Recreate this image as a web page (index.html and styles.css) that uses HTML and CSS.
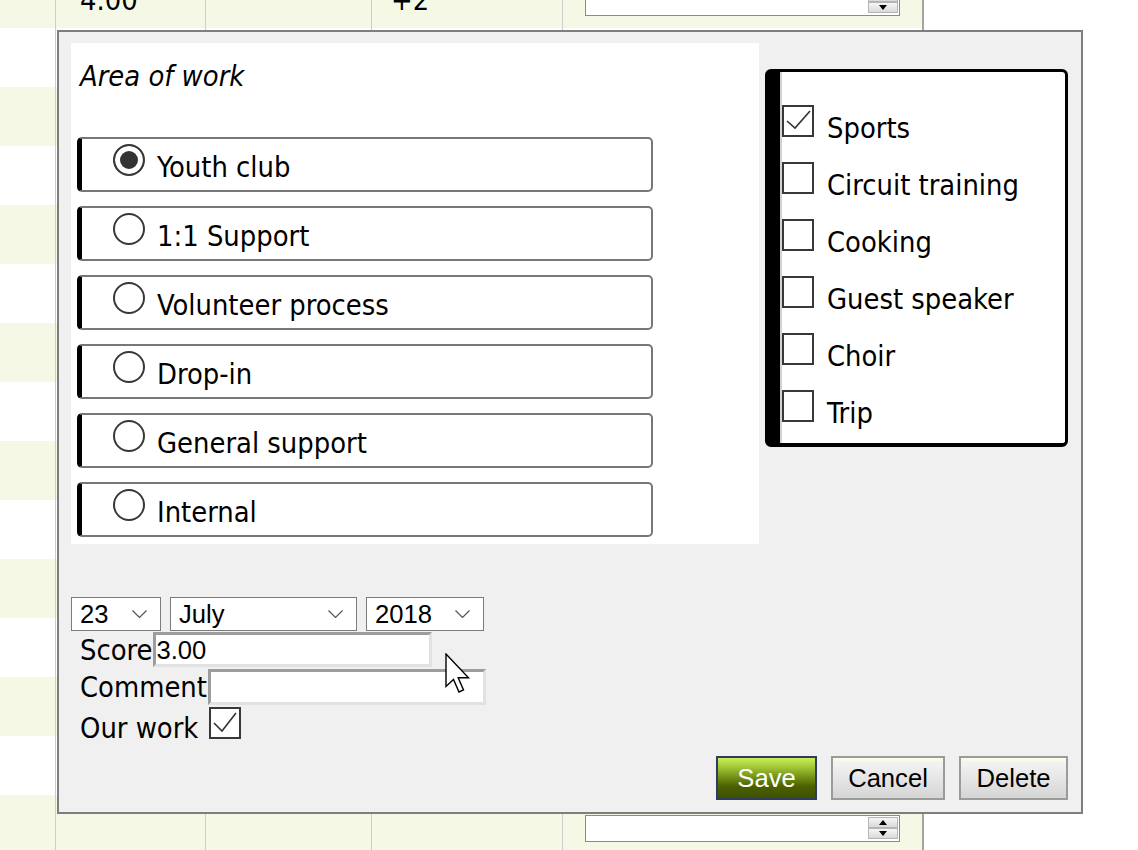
FILE: index.html
```html
<!DOCTYPE html>
<html>
<head>
<meta charset="utf-8">
<title>Area of work</title>
<link rel="stylesheet" href="styles.css">
</head>
<body>
<div class="sheet">
  <div class="row alt">
    <div class="c c1"></div>
    <div class="c c2">4.00</div>
    <div class="c c3"></div>
    <div class="c c4">+2</div>
    <div class="c c5">
      <div class="spin">
        <div class="spinbtns">
          <span class="sb"><svg width="8" height="5" viewBox="0 0 8 5"><polygon points="0,5 4,0 8,5" fill="#000"/></svg></span>
          <span class="sb"><svg width="8" height="5" viewBox="0 0 8 5"><polygon points="0,0 8,0 4,5" fill="#000"/></svg></span>
        </div>
      </div>
    </div>
  </div>
  <div class="row"><div class="c c1"></div><div class="c c2"></div><div class="c c3"></div><div class="c c4"></div><div class="c c5"></div></div>
  <div class="row alt"><div class="c c1"></div><div class="c c2"></div><div class="c c3"></div><div class="c c4"></div><div class="c c5"></div></div>
  <div class="row"><div class="c c1"></div><div class="c c2"></div><div class="c c3"></div><div class="c c4"></div><div class="c c5"></div></div>
  <div class="row alt"><div class="c c1"></div><div class="c c2"></div><div class="c c3"></div><div class="c c4"></div><div class="c c5"></div></div>
  <div class="row"><div class="c c1"></div><div class="c c2"></div><div class="c c3"></div><div class="c c4"></div><div class="c c5"></div></div>
  <div class="row alt"><div class="c c1"></div><div class="c c2"></div><div class="c c3"></div><div class="c c4"></div><div class="c c5"></div></div>
  <div class="row"><div class="c c1"></div><div class="c c2"></div><div class="c c3"></div><div class="c c4"></div><div class="c c5"></div></div>
  <div class="row alt"><div class="c c1"></div><div class="c c2"></div><div class="c c3"></div><div class="c c4"></div><div class="c c5"></div></div>
  <div class="row"><div class="c c1"></div><div class="c c2"></div><div class="c c3"></div><div class="c c4"></div><div class="c c5"></div></div>
  <div class="row alt"><div class="c c1"></div><div class="c c2"></div><div class="c c3"></div><div class="c c4"></div><div class="c c5"></div></div>
  <div class="row"><div class="c c1"></div><div class="c c2"></div><div class="c c3"></div><div class="c c4"></div><div class="c c5"></div></div>
  <div class="row alt"><div class="c c1"></div><div class="c c2"></div><div class="c c3"></div><div class="c c4"></div><div class="c c5"></div></div>
  <div class="row"><div class="c c1"></div><div class="c c2"></div><div class="c c3"></div><div class="c c4"></div><div class="c c5"></div></div>
  <div class="row alt">
    <div class="c c1"></div>
    <div class="c c2"></div>
    <div class="c c3"></div>
    <div class="c c4"></div>
    <div class="c c5">
      <div class="spin">
        <div class="spinbtns">
          <span class="sb"><svg width="8" height="5" viewBox="0 0 8 5"><polygon points="0,5 4,0 8,5" fill="#000"/></svg></span>
          <span class="sb"><svg width="8" height="5" viewBox="0 0 8 5"><polygon points="0,0 8,0 4,5" fill="#000"/></svg></span>
        </div>
      </div>
    </div>
  </div>
</div>

<div class="dialog">
  <div class="top">
    <div class="panel">
      <div class="title">Area of work</div>
      <div class="opts">
        <div class="opt"><span class="radio on"></span><span class="otxt">Youth club</span></div>
        <div class="opt"><span class="radio"></span><span class="otxt">1:1 Support</span></div>
        <div class="opt"><span class="radio"></span><span class="otxt">Volunteer process</span></div>
        <div class="opt"><span class="radio"></span><span class="otxt">Drop-in</span></div>
        <div class="opt"><span class="radio"></span><span class="otxt">General support</span></div>
        <div class="opt"><span class="radio"></span><span class="otxt">Internal</span></div>
      </div>
    </div>
    <div class="tags">
      <div class="tags-in">
        <div class="tag"><span class="cb"><svg class="tick" width="28" height="28" viewBox="0 0 28 28"><polyline points="3,14 11,21 26,4" fill="none" stroke="#333" stroke-width="1.6"/></svg></span><span class="tl">Sports</span></div>
        <div class="tag"><span class="cb"></span><span class="tl">Circuit training</span></div>
        <div class="tag"><span class="cb"></span><span class="tl">Cooking</span></div>
        <div class="tag"><span class="cb"></span><span class="tl">Guest speaker</span></div>
        <div class="tag"><span class="cb"></span><span class="tl">Choir</span></div>
        <div class="tag"><span class="cb"></span><span class="tl">Trip</span></div>
      </div>
    </div>
  </div>

  <div class="form">
    <div class="date">
      <div class="sel s-day"><span>23</span><svg class="chev" width="15" height="8" viewBox="0 0 15 8"><polyline points="0.5,0.5 7.5,7.5 14.5,0.5" fill="none" stroke="#555" stroke-width="1.2"/></svg></div>
      <div class="sel s-mon"><span>July</span><svg class="chev" width="15" height="8" viewBox="0 0 15 8"><polyline points="0.5,0.5 7.5,7.5 14.5,0.5" fill="none" stroke="#555" stroke-width="1.2"/></svg></div>
      <div class="sel s-year"><span>2018</span><svg class="chev" width="15" height="8" viewBox="0 0 15 8"><polyline points="0.5,0.5 7.5,7.5 14.5,0.5" fill="none" stroke="#555" stroke-width="1.2"/></svg></div>
    </div>
    <div class="field"><span class="lab">Score</span><div class="inp i-score">3.00</div></div>
    <div class="field"><span class="lab">Comment</span><div class="inp i-comment"></div></div>
    <div class="field f-work"><span class="lab">Our work</span><span class="cb cb-work"><svg class="tick" width="28" height="28" viewBox="0 0 28 28"><polyline points="3,14 11,22 25,4" fill="none" stroke="#333" stroke-width="1.6"/></svg></span></div>
  </div>

  <div class="actions">
    <button class="btn save">Save</button>
    <button class="btn b-cancel">Cancel</button>
    <button class="btn b-delete">Delete</button>
  </div>
</div>

<svg class="cursor" width="26" height="41" viewBox="0 0 26 41"><path d="M1 1 V33.5 L8.5 26.5 L14 39 L18.5 37 L13.2 24.8 H23.5 Z" fill="#fff" stroke="#000" stroke-width="1.4" stroke-linejoin="miter"/></svg>
</body>
</html>
```

FILE: styles.css
```css
* { box-sizing: border-box; }

html, body {
  margin: 0;
  padding: 0;
  background: #fff;
}

body {
  width: 1138px;
  height: 850px;
  overflow: hidden;
  position: relative;
  font-family: "DejaVu Sans Condensed", "DejaVu Sans", sans-serif;
  font-stretch: condensed;
  font-size: 28.8px;
  color: #000;
}

/* background sheet */
.sheet {
  margin-top: -31px;
  width: 924px;
}

.row {
  display: flex;
  height: 59px;
  background: #fff;
}

.row.alt { background: #f6f8e6; }

.c {
  height: 100%;
  border-right: 1px solid #cdcdcd;
  line-height: 34px;
}

.c1 { width: 56px; }
.c2 { width: 150px; padding: 14px 0 0 24px; }
.c3 { width: 166px; }
.c4 { width: 191px; padding: 14px 0 0 19px; }
.c5 { width: 361px; border-right: 2px solid #a3a3a3; padding: 20px 0 0 22px; }

.spin {
  width: 315px;
  height: 27px;
  background: #fff;
  border: 1px solid #8a8a8a;
  display: flex;
  justify-content: flex-end;
}

.spinbtns {
  display: flex;
  flex-direction: column;
  width: 31px;
  padding: 1px 1px 0 0;
}

.sb {
  height: 11px;
  display: flex;
  align-items: center;
  justify-content: center;
  background: linear-gradient(#f6f6f6, #d9d9d9);
  border: 1px solid #b5b5b5;
}

.sb svg { display: block; }

/* dialog */
.dialog {
  position: absolute;
  left: 57px;
  top: 30px;
  width: 1026px;
  height: 784px;
  border: 2px solid #7e7e7e;
  background: #f0f0f0;
  padding: 11px 13px 12px 12px;
  display: flex;
  flex-direction: column;
}

.top {
  display: flex;
  align-items: flex-start;
  gap: 6px;
}

.panel {
  width: 688px;
  height: 501px;
  background: #fff;
  padding: 16px 0 0 0;
}

.title {
  font-style: italic;
  line-height: 34px;
  padding-left: 9px;
}

.opts {
  margin: 44px 0 0 6px;
  width: 576px;
  display: flex;
  flex-direction: column;
  gap: 14px;
}

.opt {
  height: 55px;
  display: flex;
  align-items: flex-start;
  border: 2px solid #777;
  border-left: 5px solid #000;
  border-radius: 5px;
  padding: 5px 0 0 31px;
}

.radio {
  width: 32px;
  height: 32px;
  flex: none;
  border-radius: 50%;
  border: 2px solid #383838;
  background: #fff;
}

.radio.on {
  background: #333;
  box-shadow: inset 0 0 0 5px #fff;
}

.otxt {
  line-height: 34px;
  margin: 6px 0 0 12px;
  white-space: nowrap;
}

/* tags */
.tags {
  margin-top: 26px;
  width: 303px;
  height: 378px;
  border: 3px solid #000;
  border-bottom-width: 4px;
  border-left-width: 15px;
  border-radius: 6px;
  background: #fff;
}

.tags-in {
  height: 100%;
  border-left: 2px solid #d2d2d2;
  padding-top: 33px;
  display: flex;
  flex-direction: column;
  gap: 18px;
}

.tag {
  display: flex;
  align-items: flex-start;
}

.cb {
  width: 32px;
  height: 32px;
  flex: none;
  border: 2px solid #383838;
  background: #fff;
  display: block;
}

.tick { display: block; }

.tl {
  line-height: 32px;
  padding-top: 7px;
  margin-left: 13px;
  white-space: nowrap;
}

/* form */
.form {
  margin-top: 53px;
}

.date {
  display: flex;
  gap: 9px;
}

.sel {
  height: 34px;
  border: 1px solid #7b7b7b;
  background: #fff;
  display: flex;
  align-items: center;
  padding-left: 8px;
  font-family: "Liberation Sans", Arial, sans-serif;
  font-stretch: normal;
  font-size: 25.6px;
}

.sel .chev {
  margin-left: auto;
  margin-right: 13px;
  display: block;
}

.s-day { width: 90px; }
.s-mon { width: 187px; }
.s-year { width: 118px; }

.field {
  display: flex;
  align-items: flex-start;
  padding-left: 9px;
  margin-top: 1px;
}

.lab {
  line-height: 35px;
  padding-top: 1px;
  white-space: nowrap;
}

.inp {
  background: #fff;
  border: 3px solid;
  border-color: #9d9d9d #e2e2e2 #e2e2e2 #9d9d9d;
  font-family: "Liberation Sans", Arial, sans-serif;
  font-stretch: normal;
  font-size: 25.6px;
  line-height: 30px;
  padding-left: 1px;
}

.i-score { width: 279px; height: 35px; }
.i-comment { width: 278px; height: 36px; margin-left: 1px; }

.f-work .lab {
  padding-top: 5px;
}

.cb-work {
  margin: 1px 0 0 11px;
}

/* buttons */
.actions {
  margin-top: auto;
  display: flex;
  justify-content: flex-end;
  gap: 14px;
}

.btn {
  height: 44px;
  padding: 0;
  font-family: "Liberation Sans", Arial, sans-serif;
  font-size: 25.6px;
  color: #000;
  border: 2px solid #9b9b9b;
  border-radius: 0;
  background: linear-gradient(#fdfde6 0, #fdfde6 2px, #f4f4f4 3px, #e6e6e6 50%, #d5d5d5 100%);
}

.save {
  width: 101px;
  color: #fff;
  border-color: #2f3c5f;
  background: linear-gradient(#c8ef58 0%, #a5c93a 22%, #6f8c12 50%, #4a5f00 72%, #3f5100 100%);
}

.b-cancel { width: 114px; }
.b-delete { width: 109px; }

.cursor {
  position: absolute;
  left: 445px;
  top: 653px;
  display: block;
}
```
